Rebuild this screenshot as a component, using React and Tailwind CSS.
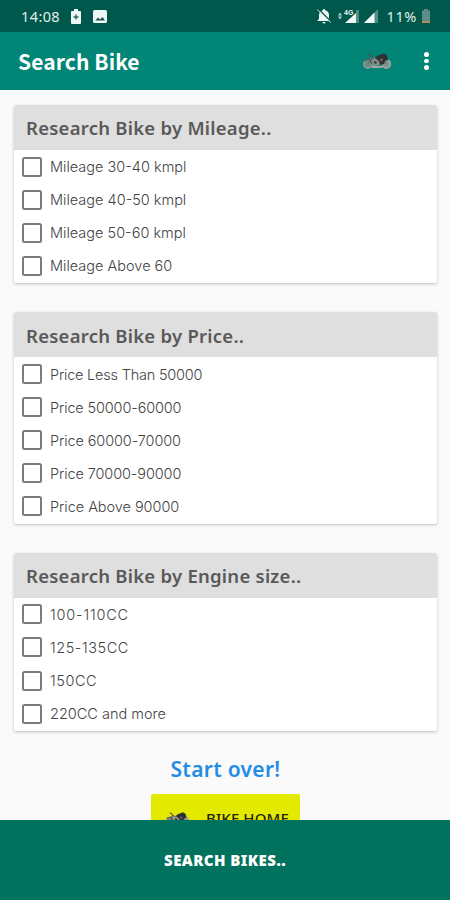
import React, { useState } from "react";

const sections = [
  {
    title: "Research Bike by Mileage..",
    options: [
      { label: "Mileage 30-40 kmpl", tracking: "tracking-[0px]" },
      { label: "Mileage 40-50 kmpl", tracking: "tracking-[0px]" },
      { label: "Mileage 50-60 kmpl", tracking: "tracking-[0px]" },
      { label: "Mileage Above 60", tracking: "tracking-[0px]" },
    ],
  },
  {
    title: "Research Bike by Price..",
    options: [
      { label: "Price Less Than 50000", tracking: "tracking-[-0.22px]" },
      { label: "Price 50000-60000", tracking: "tracking-[-0.15px]" },
      { label: "Price 60000-70000", tracking: "tracking-[-0.12px]" },
      { label: "Price 70000-90000", tracking: "tracking-[-0.12px]" },
      { label: "Price Above 90000", tracking: "tracking-[-0.05px]" },
    ],
  },
  {
    title: "Research Bike by Engine size..",
    options: [
      { label: "100-110CC", tracking: "tracking-[0.8px]" },
      { label: "125-135CC", tracking: "tracking-[0.55px]" },
      { label: "150CC", tracking: "tracking-[0.55px]" },
      { label: "220CC and more", tracking: "tracking-[0px]" },
    ],
  },
];

function BikeIcon({ className }) {
  return (
    <svg viewBox="0 0 28 18" className={className} fill="none">
      <circle cx="5" cy="12" r="4" fill="#668e88" stroke="#8c9694" strokeWidth="2" />
      <circle cx="23.3" cy="12" r="4" fill="#7d9591" stroke="#9aa3a1" strokeWidth="2" />
      <path d="M5 12 8 5.5l4 1.5 6-2 5 7" stroke="#6c7674" strokeWidth="1.5" />
      <path d="M4.5 2 7 3l2 3.5M1 9l5-2 3 5" stroke="#4a5453" strokeWidth="1.3" />
      <path d="m12 5.5 3-2 6-2 3 2L25 8l-3 1-1 3-3 1-3-4-3-1z" fill="#302f32" />
      <path d="m9 8 3-2 4 3 1 4-7 1.5z" fill="#858c8a" />
      <path d="m11 9 3 1-1 2-2-1z" fill="#383d3e" />
      <path d="m17 7 2-1 1 2-2 2z" fill="#755c62" />
      <path d="M9 15h10" stroke="#a2aaa7" strokeWidth="2" />
    </svg>
  );
}

function StatusBar() {
  return (
    <div className="flex h-8 shrink-0 items-center bg-[#00574b] pl-[21px] pr-5 text-[#e2efec]">
      <span className="font-['Noto_Sans',sans-serif] text-[14.5px] leading-8 tracking-[0.4px]">14:08</span>
      <svg viewBox="0 0 10 15" className="ml-[11px] h-[15px] w-[10px]">
        <path d="M3 0h4v2h2q1 0 1 1v11q0 1-1 1H1q-1 0-1-1V3q0-1 1-1h2z" fill="#eef7f5" />
        <path d="M5 5.5v5M2.5 8h5" stroke="#20665b" strokeWidth="1.4" />
      </svg>
      <svg viewBox="0 0 14 13" className="ml-[12px] h-[13px] w-[14px]">
        <rect width="14" height="13" rx="1.5" fill="#eef7f5" />
        <path d="m2.5 10.5 2.5-3 2 2L9.5 7l2.5 3.5z" fill="#174f46" />
      </svg>

      <div className="ml-auto flex items-center">
        <svg viewBox="0 0 16 16" className="mr-[5px] h-4 w-4">
          <path d="M8 1q1.2 0 1.2 1.3Q13 3.3 13 7.5V11l1.5 1.5V13h-13v-.5L3 11V7.5q0-4.2 3.8-5.2Q6.8 1 8 1M6.5 14h3q0 1.5-1.5 1.5T6.5 14" fill="#eef7f5" />
          <path d="m2.5 1 13 13" stroke="#00574b" strokeWidth="1.1" />
          <path d="m1.3 1.6 13.4 13" stroke="#d5e8e4" strokeWidth="1" />
        </svg>
        <svg viewBox="0 0 24 16" className="mr-[1px] h-4 w-[24px]">
          <path d="m1 7.5 2-3 2 3zM1 8.5l2 3 2-3z" fill="#bad1cc" />
          <path d="M19 2h3v13h-3z" fill="#528c82" />
          <path d="M19 5v10H8z" fill="#f0f8f6" />
          <path d="M6.5 1h9.5v6.5H6.5z" fill="#00574b" />
          <text x="7" y="6.6" className="font-['Liberation_Sans',sans-serif] text-[7px] font-bold" fill="#edf6f4">4G</text>
        </svg>
        <svg viewBox="0 0 14 14" className="ml-[2px] h-[14px] w-[14px]">
          <path d="M14 0v14H0z" fill="#528c82" />
          <path d="M10.5 3.5V14H0z" fill="#f0f8f6" />
        </svg>
        <span className="ml-[9px] font-['Noto_Sans',sans-serif] text-[14.5px] leading-8 tracking-[0.6px]">11%</span>
        <svg viewBox="0 0 8 14" className="ml-[5px] h-[14px] w-[8px]">
          <path d="M2 0h4v1.5h2V14H0V1.5h2z" fill="#5b8e85" />
          <path d="M0 12h8v2H0z" fill="#b98563" />
        </svg>
      </div>
    </div>
  );
}

function SectionCard({ section, checked, onToggle }) {
  return (
    <section className="overflow-hidden rounded-[2px] bg-white shadow-[0_1px_3px_rgba(0,0,0,0.24)]">
      <h2 className="flex h-[45px] items-center bg-[#dfdfdf] pl-[12px] pt-[1px] text-[#595959]">
        <span className="whitespace-nowrap font-['Noto_Sans',sans-serif] text-[18.5px] font-semibold tracking-[0.25px]">{section.title}</span>
      </h2>
      <div className="pb-px">
        {section.options.map((option) => (
          <label key={option.label} className="flex h-[33.1px] items-center pl-2 text-[#444]">
            <input
              type="checkbox"
              checked={checked.includes(option.label)}
              onChange={() => onToggle(option.label)}
              className="h-[20px] w-[20px] shrink-0 appearance-none rounded-[2.5px] border-2 border-[#7c7c7c] bg-white checked:bg-[#008577]"
            />
            <span className={`ml-[8px] whitespace-nowrap pt-px font-['Inter',sans-serif] text-[14.5px] font-light ${option.tracking}`}>
              {option.label}
            </span>
          </label>
        ))}
      </div>
    </section>
  );
}

export default function App() {
  const [checked, setChecked] = useState([]);

  const handleToggle = (label) => {
    setChecked((prev) =>
      prev.includes(label) ? prev.filter((item) => item !== label) : [...prev, label]
    );
  };

  return (
    <div className="flex h-[900px] w-[450px] flex-col overflow-hidden bg-[#fafafa] font-['Noto_Sans_CJK_SC',sans-serif]">
      <StatusBar />

      {/* App bar */}
      <header className="flex h-[58px] shrink-0 items-center bg-[#008577] pl-[18px] pr-[21px] text-white">
        <h1 className="text-[21px] font-bold leading-none tracking-[0.1px]">Search Bike</h1>
        <button className="ml-auto" aria-label="Bikes">
          <BikeIcon className="h-[18px] w-[28px]" />
        </button>
        <button className="ml-[33px] flex flex-col gap-[2px]" aria-label="More options">
          <span className="h-[4.5px] w-[5px] rounded-full bg-white" />
          <span className="h-[4.5px] w-[5px] rounded-full bg-white" />
          <span className="h-[4.5px] w-[5px] rounded-full bg-white" />
        </button>
      </header>

      {/* Filters */}
      <main className="flex min-h-0 flex-1 flex-col overflow-hidden pl-[14px] pr-[13px] pt-[15px]">
        <div className="flex shrink-0 flex-col gap-[29px]">
          {sections.map((section) => (
            <SectionCard key={section.title} section={section} checked={checked} onToggle={handleToggle} />
          ))}
        </div>
        <div className="flex shrink-0 flex-col items-center">
          <button onClick={() => setChecked([])} className="mt-[22px] h-[32px] font-['Noto_Sans',sans-serif] text-[21px] font-semibold leading-[32px] tracking-[0.3px] text-[#248de3]">
            Start over!
          </button>
          <button className="mt-[9px] flex h-[49px] w-[149px] items-center rounded-[2px] bg-[#e4e900] pl-[15px] text-[#23230b]">
            <BikeIcon className="h-[15px] w-[23px]" />
            <span className="ml-[17px] whitespace-nowrap font-['Noto_Sans',sans-serif] text-[15px] font-medium tracking-[0.1px]">BIKE HOME</span>
          </button>
        </div>
      </main>

      <button className="h-[80px] shrink-0 bg-[#00725d] font-['Noto_Sans',sans-serif] text-[15px] font-black tracking-[0.45px] text-white">SEARCH BIKES..</button>
    </div>
  );
}
